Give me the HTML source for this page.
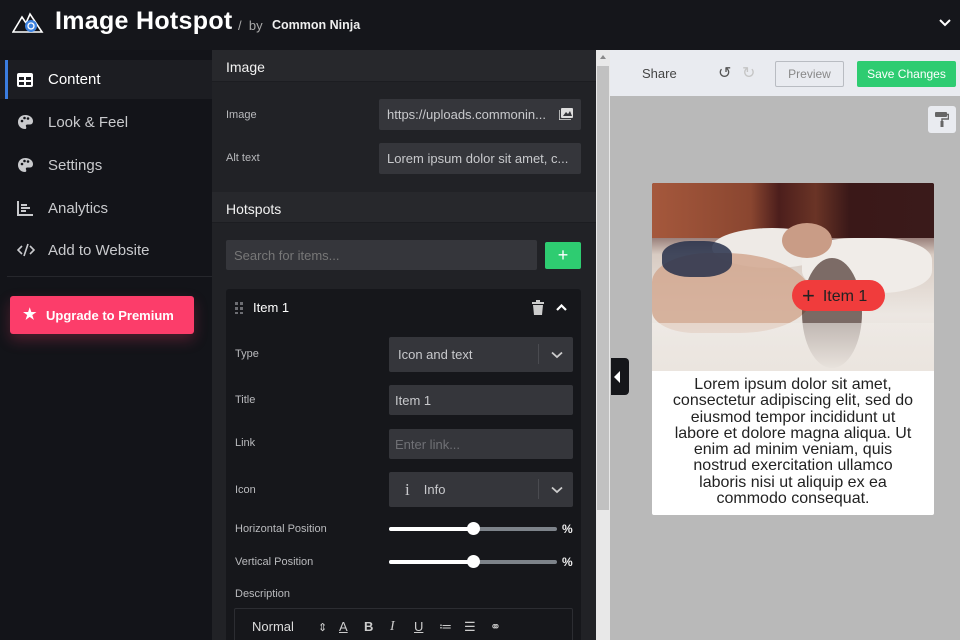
<!DOCTYPE html>
<html><head><meta charset="utf-8"><style>
*{box-sizing:border-box;margin:0;padding:0}
html,body{width:960px;height:640px;overflow:hidden}
body{background:#131419;font-family:"Liberation Sans",sans-serif;position:relative;color:#ddd}
.abs{position:absolute}
.top{left:0;top:0;width:960px;height:50px;background:#15161b}
.side{left:0;top:50px;width:212px;height:590px;background:#131419}
.nav{position:absolute;left:0;width:212px;height:40px;display:flex;align-items:center;font-size:15px;color:#c9cacd}
.nav svg{position:absolute;left:17px}
.nav span{position:absolute;left:48px}
.mid{left:212px;top:50px;width:384px;height:590px;background:#212226;overflow:hidden}
.sec{position:absolute;left:0;width:384px;height:32px;background:#27282c;font-size:14px;color:#f2f2f2;padding:9px 14px;border-bottom:1px solid #1c1d21}
.lbl{position:absolute;font-size:11px;color:#b9babd}
.inp{position:absolute;background:#35363b;border-radius:2px;font-size:13px;color:#c8c9cc;padding:0 8px;display:flex;align-items:center;white-space:nowrap;overflow:hidden}
.item{left:226px;top:289px;width:355px;height:351px;background:#16171b;border-radius:3px 3px 0 0}
.right{left:610px;top:50px;width:350px;height:590px;background:#b9b9b9}
.slider{position:absolute;left:389px;width:168px;height:4px;background:#7d838a;border-radius:2px}
.slider i{position:absolute;left:0;top:0;width:84px;height:4px;background:#fff;border-radius:2px}
.slider b{position:absolute;left:78px;top:-5px;width:13px;height:13px;background:#fff;border-radius:50%}
.pct{position:absolute;left:562px;font-size:12px;font-weight:bold;color:#eee}
.tb{position:absolute;top:619px;font-size:13px;color:#ccc}
</style></head><body>
<div class="abs top">
<svg class="abs" style="left:12px;top:11px" width="32" height="24" viewBox="0 0 32 24"><path d="M1 21 L10 6 L14 12 L18 3 L30 21 Z" fill="none" stroke="#fff" stroke-width="1.6"/><circle cx="19" cy="15" r="6" fill="#3d82e0"/><circle cx="19" cy="15" r="3" fill="none" stroke="#fff" stroke-width="1.3"/></svg>
<div class="abs" style="left:55px;top:7px;font-size:25px;font-weight:bold;color:#fff;letter-spacing:.3px">Image Hotspot</div>
<div class="abs" style="left:238px;top:18px;font-size:13px;color:#aaa">/ &nbsp;by</div>
<div class="abs" style="left:272px;top:18px;font-size:12.5px;font-weight:bold;color:#eee">Common Ninja</div>
<svg class="abs" style="left:938px;top:18px" width="14" height="10" viewBox="0 0 14 10"><path d="M2 2 L7 7 L12 2" fill="none" stroke="#fff" stroke-width="2"/></svg>
</div>
<div class="abs side">
<div class="nav" style="top:10px;background:#1c1d22;height:39px"><div class="abs" style="left:5px;top:0;width:3px;height:39px;background:#3b7de0"></div>
<svg width="16" height="14" viewBox="0 0 16 14"><rect x="0" y="0" width="16" height="14" rx="2" fill="#fff"/><rect x="2" y="4" width="5" height="3" fill="#1c1d22"/><rect x="9" y="4" width="5" height="3" fill="#1c1d22"/><rect x="2" y="9" width="5" height="3" fill="#1c1d22"/><rect x="9" y="9" width="5" height="3" fill="#1c1d22"/></svg><span style="color:#fff">Content</span></div>
<div class="nav" style="top:52px"><svg width="17" height="16" viewBox="0 0 17 16"><path d="M8.5 1C4 1 1 4 1 8s3 7 7 7c1.5 0 1.5-1.5 1-2.5-.5-1 0-2 1.5-2H13c2 0 3-1.5 3-3.5C16 3.5 12.5 1 8.5 1z" fill="#c9cacd"/><circle cx="5" cy="7" r="1.3" fill="#131419"/><circle cx="7.5" cy="4" r="1.3" fill="#131419"/><circle cx="11" cy="4.5" r="1.3" fill="#131419"/></svg><span>Look &amp; Feel</span></div>
<div class="nav" style="top:95px"><svg width="17" height="16" viewBox="0 0 17 16"><path d="M8.5 1C4 1 1 4 1 8s3 7 7 7c1.5 0 1.5-1.5 1-2.5-.5-1 0-2 1.5-2H13c2 0 3-1.5 3-3.5C16 3.5 12.5 1 8.5 1z" fill="#c9cacd"/><circle cx="5" cy="7" r="1.3" fill="#131419"/><circle cx="7.5" cy="4" r="1.3" fill="#131419"/><circle cx="11" cy="4.5" r="1.3" fill="#131419"/></svg><span>Settings</span></div>
<div class="nav" style="top:138px"><svg width="16" height="15" viewBox="0 0 16 15"><path d="M1 0V14H16" fill="none" stroke="#c9cacd" stroke-width="2"/><path d="M4 4H10M4 7H13M4 10H9" stroke="#c9cacd" stroke-width="2"/></svg><span>Analytics</span></div>
<div class="nav" style="top:180px"><svg width="18" height="14" viewBox="0 0 18 14"><path d="M5 3L1 7L5 11M13 3L17 7L13 11M11 1L7 13" fill="none" stroke="#c9cacd" stroke-width="1.6"/></svg><span>Add to Website</span></div>
<div class="abs" style="left:7px;top:226px;width:205px;height:1px;background:#26272c"></div>
<div class="abs" style="left:10px;top:246px;width:184px;height:38px;background:#fc3d6a;border-radius:3px;box-shadow:0 6px 14px rgba(252,61,106,.25);color:#fff;font-weight:bold;font-size:13px;display:flex;align-items:center;padding-left:36px">Upgrade to Premium<span class="abs" style="left:13px;top:9px;font-size:15px">★</span></div>
</div>
<div class="abs mid">
<div class="sec" style="top:0">Image</div>
<div class="lbl" style="left:14px;top:59px">Image</div>
<div class="inp" style="left:167px;top:49px;width:202px;height:31px">https://uploads.commonin...<svg class="abs" style="right:8px;top:9px" width="14" height="12" viewBox="0 0 14 12"><rect x="2" y="0" width="12" height="10" rx="1" fill="#ddd"/><path d="M4 8L7 4L9 6L11 3L13 8Z" fill="#35363b"/><path d="M0 2V12H12" fill="none" stroke="#ddd" stroke-width="1.5"/></svg></div>
<div class="lbl" style="left:14px;top:102px">Alt text</div>
<div class="inp" style="left:167px;top:93px;width:202px;height:31px">Lorem ipsum dolor sit amet, c...</div>
<div class="sec" style="top:142px;height:31px">Hotspots</div>
<div class="inp" style="left:14px;top:190px;width:311px;height:30px;color:#777">Search for items...</div>
<div class="abs" style="left:333px;top:192px;width:36px;height:27px;background:#2ecc71;border-radius:2px;color:#fff;font-size:18px;text-align:center;line-height:26px">+</div>
</div>
<div class="abs" style="left:596px;top:50px;width:14px;height:590px;background:#e8e8e8"></div>
<div class="abs" style="left:597px;top:66px;width:12px;height:444px;background:#c1c1c1"></div>
<div class="abs" style="left:600px;top:55px;width:0;height:0;border-left:3px solid transparent;border-right:3px solid transparent;border-bottom:4px solid #888"></div>
<div class="abs item"></div>
<svg class="abs" style="left:235px;top:302px" width="10" height="12"><g fill="#6c6d72"><rect x="0" y="0" width="3" height="3"/><rect x="5" y="0" width="3" height="3"/><rect x="0" y="5" width="3" height="3"/><rect x="5" y="5" width="3" height="3"/><rect x="0" y="10" width="3" height="2"/><rect x="5" y="10" width="3" height="2"/></g></svg>
<div class="abs" style="left:253px;top:300px;font-size:13px;color:#fff">Item 1</div>
<svg class="abs" style="left:532px;top:300px" width="12" height="15" viewBox="0 0 12 15"><rect x="0" y="2" width="12" height="2" fill="#ccc"/><rect x="4" y="0" width="4" height="2" fill="#ccc"/><path d="M1 5H11L10 15H2Z" fill="#ccc"/></svg>
<svg class="abs" style="left:556px;top:304px" width="11" height="8" viewBox="0 0 11 8"><path d="M1 6L5.5 1.5L10 6" fill="none" stroke="#fff" stroke-width="2.2"/></svg>
<div class="lbl" style="left:235px;top:348px">Type</div>
<div class="inp" style="left:389px;top:337px;width:184px;height:35px;padding-left:9px">Icon and text<div class="abs" style="left:149px;top:7px;width:1px;height:20px;background:#4a4b50"></div><svg class="abs" style="left:162px;top:14px" width="12" height="8" viewBox="0 0 12 8"><path d="M1 1.5L6 6L11 1.5" fill="none" stroke="#ccc" stroke-width="1.8"/></svg></div>
<div class="lbl" style="left:235px;top:394px">Title</div>
<div class="inp" style="left:389px;top:385px;width:184px;height:30px;padding-left:6px">Item 1</div>
<div class="lbl" style="left:235px;top:437px">Link</div>
<div class="inp" style="left:389px;top:429px;width:184px;height:30px;padding-left:6px;color:#6f7075">Enter link...</div>
<div class="lbl" style="left:235px;top:484px">Icon</div>
<div class="inp" style="left:389px;top:472px;width:184px;height:35px;padding-left:16px"><span style="font-family:'Liberation Serif';font-size:17px;margin-right:14px">i</span>Info<div class="abs" style="left:149px;top:7px;width:1px;height:20px;background:#4a4b50"></div><svg class="abs" style="left:162px;top:14px" width="12" height="8" viewBox="0 0 12 8"><path d="M1 1.5L6 6L11 1.5" fill="none" stroke="#ccc" stroke-width="1.8"/></svg></div>
<div class="lbl" style="left:235px;top:523px">Horizontal Position</div>
<div class="slider" style="top:527px"><i></i><b></b></div><div class="pct" style="top:522px">%</div>
<div class="lbl" style="left:235px;top:556px">Vertical Position</div>
<div class="slider" style="top:560px"><i></i><b></b></div><div class="pct" style="top:555px">%</div>
<div class="lbl" style="left:235px;top:588px">Description</div>
<div class="abs" style="left:234px;top:608px;width:339px;height:40px;border:1px solid #2c2d32;border-radius:2px"></div>
<div class="abs" style="left:252px;top:619px;font-size:13px;color:#ddd">Normal</div>
<div class="tb" style="left:318px;font-size:11px;top:621px">⇕</div>
<div class="tb" style="left:339px;text-decoration:underline">A</div>
<div class="tb" style="left:364px;font-weight:bold">B</div>
<div class="tb" style="left:390px;font-family:'Liberation Serif';font-style:italic;font-size:14px">I</div>
<div class="tb" style="left:414px;text-decoration:underline">U</div>
<div class="tb" style="left:439px">≔</div>
<div class="tb" style="left:464px">☰</div>
<div class="tb" style="left:490px">⚭</div>
<div class="abs right"></div>
<div class="abs" style="left:610px;top:50px;width:350px;height:46px;background:#e9ebf0"></div>
<div class="abs" style="left:642px;top:66px;font-size:13px;color:#444">Share</div>
<div class="abs" style="left:718px;top:63px;font-size:16px;color:#555">↺</div>
<div class="abs" style="left:742px;top:63px;font-size:16px;color:#c5c5c5">↻</div>
<div class="abs" style="left:775px;top:61px;width:69px;height:26px;border:1px solid #b9bcc2;border-radius:2px;font-size:12px;color:#888;text-align:center;line-height:24px">Preview</div>
<div class="abs" style="left:857px;top:61px;width:99px;height:26px;background:#2ecc71;border-radius:2px;font-size:12px;color:#fff;text-align:center;line-height:26px">Save Changes</div>
<div class="abs" style="left:928px;top:106px;width:28px;height:27px;background:#e9ebf0;border-radius:3px"><svg class="abs" style="left:7px;top:6px" width="14" height="15" viewBox="0 0 14 15"><rect x="0" y="0" width="12" height="5" rx="1" fill="#666"/><path d="M12 2.5H13.5V7H7V9" fill="none" stroke="#666" stroke-width="1.5"/><rect x="5.5" y="9" width="3" height="6" fill="#666"/></svg></div>
<div class="abs" style="left:611px;top:358px;width:18px;height:37px;background:#15161a;border-radius:0 4px 4px 0"><div class="abs" style="left:3px;top:13px;border-top:6px solid transparent;border-bottom:6px solid transparent;border-right:6px solid #fff"></div></div>
<div class="abs" style="left:652px;top:183px;width:282px;height:332px;background:#fff;border-radius:2px;overflow:hidden">
<div class="abs" style="left:0;top:0;width:282px;height:188px;background:linear-gradient(180deg,#5a2820 0%,#4a2020 18%,#d8cbc2 38%,#ece7e2 70%,#e6dfd8 100%)"></div>
<div class="abs" style="left:0;top:0;width:282px;height:55px;background:linear-gradient(90deg,#a5583c 0%,#8a4630 35%,#4c1e1c 45%,#6a3426 58%,#3a1818 70%,#3a1a1a 100%)"></div>
<div class="abs" style="left:60px;top:45px;width:120px;height:40px;background:#eeeae6;border-radius:50%"></div>
<div class="abs" style="left:150px;top:55px;width:130px;height:55px;background:#f0ece8;border-radius:40%"></div>
<div class="abs" style="left:0;top:70px;width:160px;height:80px;background:#d2a890;border-radius:40% 60% 50% 30%;opacity:.85"></div>
<div class="abs" style="left:10px;top:58px;width:70px;height:36px;background:#27304a;border-radius:40%;opacity:.85"></div>
<div class="abs" style="left:130px;top:40px;width:50px;height:35px;background:#c99c86;border-radius:50%"></div>
<div class="abs" style="left:150px;top:75px;width:60px;height:110px;background:#3e2620;border-radius:50%;opacity:.65"></div>
<div class="abs" style="left:0;top:140px;width:282px;height:48px;background:linear-gradient(180deg,rgba(240,236,232,.6),#ebe5df)"></div>
<div class="abs" style="left:140px;top:97px;width:93px;height:31px;background:#f03c3c;border-radius:16px;color:#222;font-size:16px;line-height:31px;padding-left:10px"><span style="font-size:22px;vertical-align:-2px;margin-right:8px">+</span>Item 1</div>
<div class="abs" style="left:0;top:194px;width:282px;text-align:center;font-size:16px;line-height:16.3px;color:#222;white-space:nowrap">Lorem ipsum dolor sit amet,<br>consectetur adipiscing elit, sed do<br>eiusmod tempor incididunt ut<br>labore et dolore magna aliqua. Ut<br>enim ad minim veniam, quis<br>nostrud exercitation ullamco<br>laboris nisi ut aliquip ex ea<br>commodo consequat.</div>
</div>
</body></html>
